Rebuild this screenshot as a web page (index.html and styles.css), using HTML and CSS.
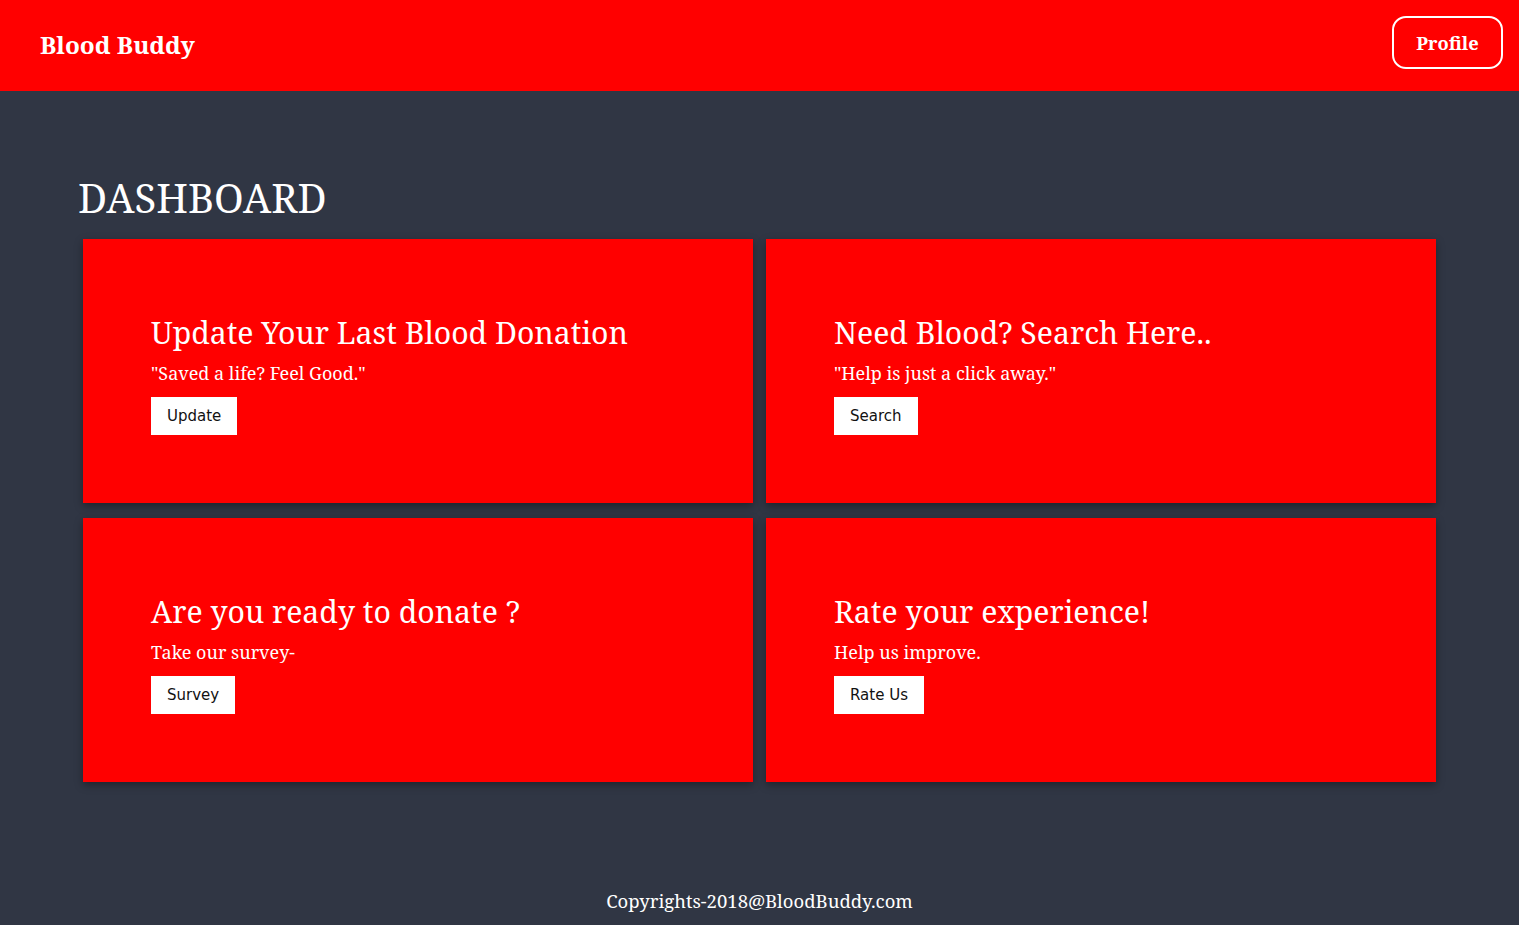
FILE: index.html
```html
<!DOCTYPE html>
<html>
<head>
<meta charset="utf-8">
<title>Blood Buddy</title>
<link rel="stylesheet" href="styles.css">
</head>
<body>
<header class="topbar">
  <div class="brand">Blood Buddy</div>
  <a class="profile-btn" href="#">Profile</a>
</header>
<main class="content">
  <h1 class="page-title">DASHBOARD</h1>
  <div class="grid">
    <section class="card">
      <h2 class="card-title">Update Your Last Blood Donation</h2>
      <p class="card-text">"Saved a life? Feel Good."</p>
      <button class="card-btn">Update</button>
    </section>
    <section class="card">
      <h2 class="card-title">Need Blood? Search Here..</h2>
      <p class="card-text">"Help is just a click away."</p>
      <button class="card-btn">Search</button>
    </section>
    <section class="card">
      <h2 class="card-title">Are you ready to donate ?</h2>
      <p class="card-text">Take our survey-</p>
      <button class="card-btn">Survey</button>
    </section>
    <section class="card">
      <h2 class="card-title">Rate your experience!</h2>
      <p class="card-text">Help us improve.</p>
      <button class="card-btn">Rate Us</button>
    </section>
  </div>
</main>
<footer class="footer">Copyrights-2018@BloodBuddy.com</footer>
</body>
</html>
```
FILE: styles.css
```css
html, body {
  margin: 0;
  padding: 0;
}
body {
  background: #303644;
  font-family: "Noto Serif", "Droid Serif", "DejaVu Serif", serif;
  color: #fff;
  min-height: 925px;
}
.topbar {
  height: 91px;
  background: #ff0000;
  display: flex;
  align-items: center;
  justify-content: space-between;
  padding: 0 16px 0 40px;
  box-sizing: border-box;
}
.brand {
  font-size: 24.3px;
  font-weight: bold;
  margin-top: -2px;
}
.profile-btn {
  color: #fff;
  text-decoration: none;
  font-weight: bold;
  font-size: 18.3px;
  border: 2px solid #fff;
  border-radius: 14px;
  width: 111px;
  height: 53px;
  box-sizing: border-box;
  display: flex;
  align-items: center;
  justify-content: center;
  margin-top: -6px;
}
.content {
  padding: 80px 83px 0 83px;
}
.page-title {
  font-weight: normal;
  font-size: 40px;
  margin: 0 0 14px -5px;
  line-height: 54px;
}
.grid {
  display: grid;
  grid-template-columns: 670px 670px;
  column-gap: 13px;
  row-gap: 15px;
}
.card {
  background: #ff0000;
  height: 264px;
  box-sizing: border-box;
  padding: 74px 68px 0 68px;
  box-shadow: 0 3px 8px rgba(0, 0, 0, 0.35);
}
.card-title {
  font-weight: normal;
  font-size: 30.2px;
  line-height: 40px;
  margin: 0;
}
.card-text {
  font-size: 18px;
  line-height: 24px;
  margin: 8px 0 12px 0;
}
.card-btn {
  background: #fff;
  border: none;
  color: #111;
  font-family: "DejaVu Sans", Verdana, sans-serif;
  font-size: 15px;
  height: 38px;
  padding: 0 16px;
  cursor: pointer;
}
.footer {
  text-align: center;
  font-size: 18.5px;
  padding-top: 106px;
}
```
